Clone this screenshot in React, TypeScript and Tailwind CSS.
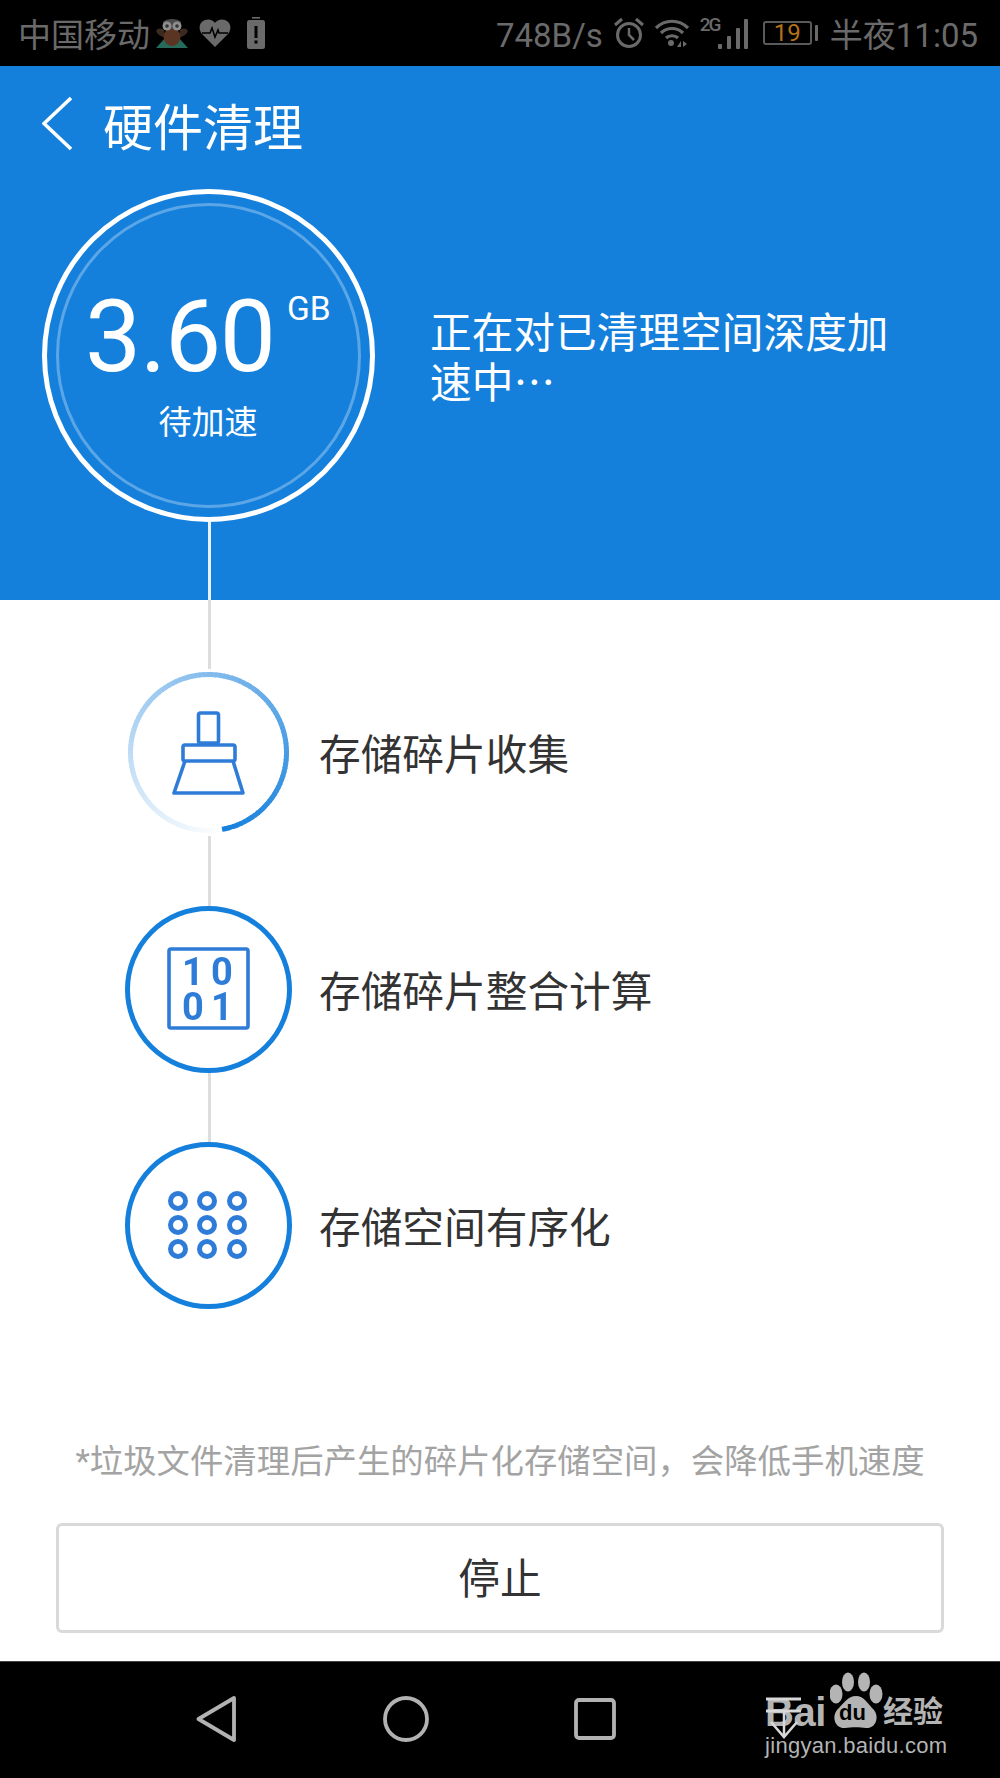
import React from "react";

const BLUE = "#1580dc";
const ICON = "#2f7cd8";
const GREY = "#6a6a6a";

function arcPath(cx: number, cy: number, r: number, a0: number, a1: number) {
  const p = (a: number) => {
    const t = ((a - 90) * Math.PI) / 180;
    return [cx + r * Math.cos(t), cy + r * Math.sin(t)];
  };
  const [x0, y0] = p(a0);
  const [x1, y1] = p(a1);
  return `M${x0.toFixed(2)} ${y0.toFixed(2)}A${r} ${r} 0 0 1 ${x1.toFixed(2)} ${y1.toFixed(2)}`;
}

function mix(t: number) {
  const c = [0x15, 0x80, 0xdc].map((v) => Math.round(255 + (v - 255) * t));
  return `rgb(${c[0]},${c[1]},${c[2]})`;
}

function GradientRing() {
  const segs = [];
  const n = 120;
  const start = -190;
  const end = 170;
  for (let i = 0; i < n; i++) {
    const a0 = start + ((end - start) * i) / n;
    const a1 = start + ((end - start) * (i + 1)) / n + 0.8;
    segs.push(
      <path key={i} d={arcPath(83.5, 83.5, 78, a0, Math.min(a1, end))} stroke={mix((i + 0.5) / n)} strokeWidth={5} fill="none" />
    );
  }
  return <>{segs}</>;
}

function BroomIcon() {
  return (
    <svg width="167" height="167" viewBox="0 0 167 167" className="shrink-0">
      <GradientRing />
      <g fill="none" stroke={ICON} strokeWidth="3.6" strokeLinejoin="round" className="blur-[0.4px]">
        <rect x="73.5" y="44" width="20" height="30" rx="2" />
        <rect x="58" y="76" width="52" height="16" rx="2" />
        <path d="M60 92 L49 124 H118 L108 92" />
      </g>
    </svg>
  );
}

function BinaryIcon() {
  return (
    <svg width="167" height="167" viewBox="0 0 167 167" className="shrink-0">
      <circle cx="83.5" cy="83.5" r="81" fill="none" stroke={BLUE} strokeWidth="5" />
      <g className="blur-[0.4px]">
        <rect x="44" y="43" width="79" height="79" rx="2" fill="none" stroke={ICON} strokeWidth="3.6" />
        <g fill={ICON} fontFamily="Roboto, sans-serif" fontWeight="700" fontSize="38" textAnchor="middle">
          <text x="68" y="79">1</text>
          <text x="97" y="79">0</text>
          <text x="68" y="114">0</text>
          <text x="97" y="114">1</text>
        </g>
      </g>
    </svg>
  );
}

function DotsIcon() {
  const xs = [53, 82, 112];
  const ys = [59, 83, 107];
  return (
    <svg width="167" height="167" viewBox="0 0 167 167" className="shrink-0">
      <circle cx="83.5" cy="83.5" r="81" fill="none" stroke={BLUE} strokeWidth="5" />
      <g className="blur-[0.5px]">
        {ys.map((y) =>
          xs.map((x) => <circle key={`${x}-${y}`} cx={x} cy={y} r="7.5" fill="none" stroke={ICON} strokeWidth="5" />)
        )}
      </g>
    </svg>
  );
}

function Connector({ h }: { h: string }) {
  return <div className={`${h} w-[3px] bg-[#dddddd] ml-[83px]`} />;
}

function Step({ icon, label }: { icon: React.ReactNode; label: string }) {
  return (
    <div className="flex items-center h-[167px]">
      {icon}
      <span className="ml-[27px] pt-[6px] text-[41.7px] leading-none text-[#333333]">{label}</span>
    </div>
  );
}

function StatusLeftIcons() {
  return (
    <div className="flex items-center">
      <svg width="34" height="32" viewBox="0 0 34 32" className="ml-[5px]">
        <path d="M1 31 L10 21 H24 L33 31 Z" fill="#256a5a" />
        <path d="M1 14 C3 11 6 11 9 13 L10 20 C6 20 3 18 1 14 Z M33 14 C31 11 28 11 25 13 L24 20 C28 20 31 18 33 14 Z" fill="#3b2a20" />
        <ellipse cx="17" cy="20" rx="8.5" ry="9" fill="#5a3524" />
        <path d="M8 5 C11 1 23 1 26 5 L26 12 H8 Z" fill="#4a4a4a" />
        <circle cx="12" cy="9" r="4.5" fill="#8e8e8e" />
        <circle cx="22" cy="9" r="4.5" fill="#8e8e8e" />
        <circle cx="12" cy="9" r="1.8" fill="#333333" />
        <circle cx="22" cy="9" r="1.8" fill="#333333" />
      </svg>
      <svg width="32" height="28" viewBox="0 0 32 28" className="ml-[10px]">
        <path d="M16 28 L3 15 C-1 10 0 3 6 1 C10 -0.5 14 1 16 4 C18 1 22 -0.5 26 1 C32 3 33 10 29 15 Z" fill={GREY} />
        <path d="M3 14 H11 L13 9 L16 18 L19 11 L20 14 H29" fill="none" stroke="#000" strokeWidth="1.6" />
      </svg>
      <svg width="18" height="32" viewBox="0 0 18 32" className="ml-[16px]">
        <rect x="5" y="0" width="8" height="1.6" fill={GREY} />
        <rect x="0" y="3" width="18" height="29" rx="2.5" fill={GREY} />
        <rect x="7.5" y="9" width="3" height="12" fill="#000" />
        <rect x="7.5" y="23.5" width="3" height="3" fill="#000" />
      </svg>
    </div>
  );
}

function StatusRightIcons() {
  return (
    <div className="flex items-center">
      <svg width="30" height="32" viewBox="0 0 30 32">
        <circle cx="15" cy="18" r="11.5" fill="none" stroke={GREY} strokeWidth="3" />
        <path d="M15 11 V18 L20 23" fill="none" stroke={GREY} strokeWidth="2.5" />
        <path d="M1 8 L8 2 M29 8 L22 2" fill="none" stroke={GREY} strokeWidth="3" />
      </svg>
      <svg width="36" height="32" viewBox="0 0 36 32" className="ml-[10px]">
        <g fill="none" stroke={GREY} strokeWidth="3.2">
          <path d="M2 11 C11 2 25 2 34 11" />
          <path d="M7 16 C13 10 23 10 29 16" />
          <path d="M12 21 C15 18 21 18 24 21" />
        </g>
        <circle cx="17" cy="26" r="3" fill={GREY} />
        <path d="M23 30 L27 24 V30 Z M29 24 L33 27 L29 30 Z" fill={GREY} />
      </svg>
      <div className="ml-[10px] flex items-end h-[32px]">
        <span className="self-start w-[17px] text-[19px] leading-[16px] font-medium tracking-[-2px] text-[#6a6a6a]">2G</span>
        <svg width="31" height="30" viewBox="0 0 31 30">
          <rect x="1" y="25" width="4" height="5" rx="1" fill={GREY} />
          <rect x="10" y="17" width="4" height="13" rx="1" fill={GREY} />
          <rect x="19" y="9" width="4" height="21" rx="1" fill={GREY} />
          <rect x="27" y="0" width="4" height="30" rx="1" fill={GREY} />
        </svg>
      </div>
      <div className="ml-[15px] flex items-center">
        <div className="w-[49px] h-[24px] border-2 border-[#5a5a5a] rounded-[3px] flex items-center justify-center text-[24px] leading-none text-[#b5701a]">19</div>
        <div className="ml-[3px] w-[3px] h-[16px] bg-[#6a6a6a] rounded-[1px]" />
      </div>
    </div>
  );
}

function NavBar() {
  return (
    <div className="relative h-[117px] bg-black border-t border-[#444444] flex items-center pl-[196px] pb-[2px]">
      <svg width="41" height="46" viewBox="0 0 41 46" className="shrink-0">
        <path d="M38 2 L2.5 23 L38 44 Z" fill="none" stroke="#b2b2b2" strokeWidth="3.8" strokeLinejoin="round" />
      </svg>
      <svg width="46" height="46" viewBox="0 0 46 46" className="ml-[146px] shrink-0">
        <circle cx="23" cy="23" r="21" fill="none" stroke="#b2b2b2" strokeWidth="3.8" />
      </svg>
      <svg width="42" height="42" viewBox="0 0 42 42" className="ml-[145px] shrink-0">
        <rect x="2" y="2" width="38" height="38" rx="3" fill="none" stroke="#b2b2b2" strokeWidth="3.8" />
      </svg>
      <div className="absolute left-[765px] top-[10px] w-[182px] h-[86px] text-[#b4b4b4]">
        <span className="absolute left-0 top-[22px] h-[36px] text-[40px] leading-[36px] font-bold font-['Liberation_Sans',sans-serif] tracking-[-0.5px]">Bai</span>
        <svg width="54" height="60" viewBox="0 0 54 60" className="absolute left-[65px] top-0">
          <ellipse cx="6" cy="22" rx="6.5" ry="9.5" fill="#b4b4b4" />
          <ellipse cx="18" cy="10" rx="6" ry="9.5" fill="#b4b4b4" />
          <ellipse cx="34" cy="10" rx="6" ry="9.5" fill="#b4b4b4" />
          <ellipse cx="46" cy="22" rx="6.5" ry="9.5" fill="#b4b4b4" />
          <path d="M26 24 C34 24 38 32 44 38 C50 46 45 57 36 56 C30 55 21 55 15 56 C6 57 1 46 7 38 C13 32 18 24 26 24 Z" fill="#b4b4b4" />
        </svg>
        <span className="absolute left-[74px] top-[31px] text-[22px] leading-[20px] font-bold text-black font-['Liberation_Sans',sans-serif]">du</span>
        <span className="absolute left-[118px] top-[25px] h-[30px] text-[30px] leading-[30px] font-bold">经验</span>
        <span className="absolute left-0 top-[62px] h-[24px] text-[22px] leading-[24px] font-['Liberation_Sans',sans-serif] tracking-[0.3px]">jingyan.baidu.com</span>
      </div>
      <svg width="36" height="44" viewBox="0 0 36 44" className="relative ml-[150px] shrink-0">
        <path d="M0 2 H35 M0 14 H35" stroke="#d8d8d8" strokeWidth="3" fill="none" />
        <path d="M18 14 V40 M5 25 L18 40 L31 25" stroke="#d8d8d8" strokeWidth="2.5" fill="none" />
      </svg>
    </div>
  );
}

export default function App() {
  return (
    <div className="w-[1000px] h-[1778px] overflow-hidden flex flex-col bg-white font-['Roboto','Noto_Sans_CJK_SC',sans-serif]">
      <div className="h-[66px] bg-black flex items-center justify-between pl-[18px] pr-[22px] text-[33px] leading-none text-[#6a6a6a]">
        <div className="flex items-center">
          <span className="pt-[4px]">中国移动</span>
          <StatusLeftIcons />
        </div>
        <div className="flex items-center">
          <span className="mr-[11px] pt-[4px]">748B/s</span>
          <StatusRightIcons />
          <span className="ml-[12px] pt-[4px]">半夜11:05</span>
        </div>
      </div>

      <div className="h-[534px] bg-[#1580dc] flex flex-col">
        <div className="h-[123px] flex items-start pl-[42px] pt-[30px] text-white">
          <svg width="30" height="56" viewBox="0 0 30 56" className="shrink-0">
            <path d="M29 2 L2 27.5 L29 53" fill="none" stroke="#ffffff" strokeWidth="3.6" />
          </svg>
          <span className="ml-[31px] mt-[3px] text-[50px] leading-[60px]">硬件清理</span>
        </div>
        <div className="flex items-center pl-[42px]">
          <div className="relative w-[333px] h-[333px] shrink-0 rounded-full border-[5px] border-white flex flex-col items-center pt-[93px] text-white">
            <div className="absolute left-[9px] top-[9px] w-[305px] h-[305px] rounded-full border-[3px] border-white/30" />
            <span className="relative self-start ml-[38px] text-[100px] leading-[100px] tracking-[-1.3px]">3.60</span>
            <span className="absolute left-[240px] top-[95px] text-[33.5px] leading-[40px]">GB</span>
            <span className="relative mt-[16px] text-[33px] leading-[40px] -ml-[1px]">待加速</span>
          </div>
          <p className="ml-[55px] w-[470px] mt-[6px] text-[41.7px] leading-[47px] text-white">
            正在对已清理空间深度加速中<span className="font-['Noto_Sans_CJK_SC',sans-serif]">…</span>
          </p>
        </div>
        <div className="ml-[208px] w-[3px] h-[78px] bg-[#e8f2fb]" />
      </div>

      <div className="flex-1 flex flex-col">
        <div className="pl-[125px]">
          <Connector h="h-[69px]" />
          <Step icon={<BroomIcon />} label="存储碎片收集" />
          <Connector h="h-[70px]" />
          <Step icon={<BinaryIcon />} label="存储碎片整合计算" />
          <Connector h="h-[69px]" />
          <Step icon={<DotsIcon />} label="存储空间有序化" />
        </div>
        <p className="mt-[133px] h-[40px] text-[33.4px] leading-[40px] text-[#a3a3a3] text-center">*垃圾文件清理后产生的碎片化存储空间，会降低手机速度</p>
        <div className="mt-[41px] mx-[56px] h-[110px] border-[3px] border-[#d9d9d9] rounded-[6px] flex items-center justify-center pt-[4px] text-[41.7px] text-[#333333]">停止</div>
      </div>

      <NavBar />
    </div>
  );
}
